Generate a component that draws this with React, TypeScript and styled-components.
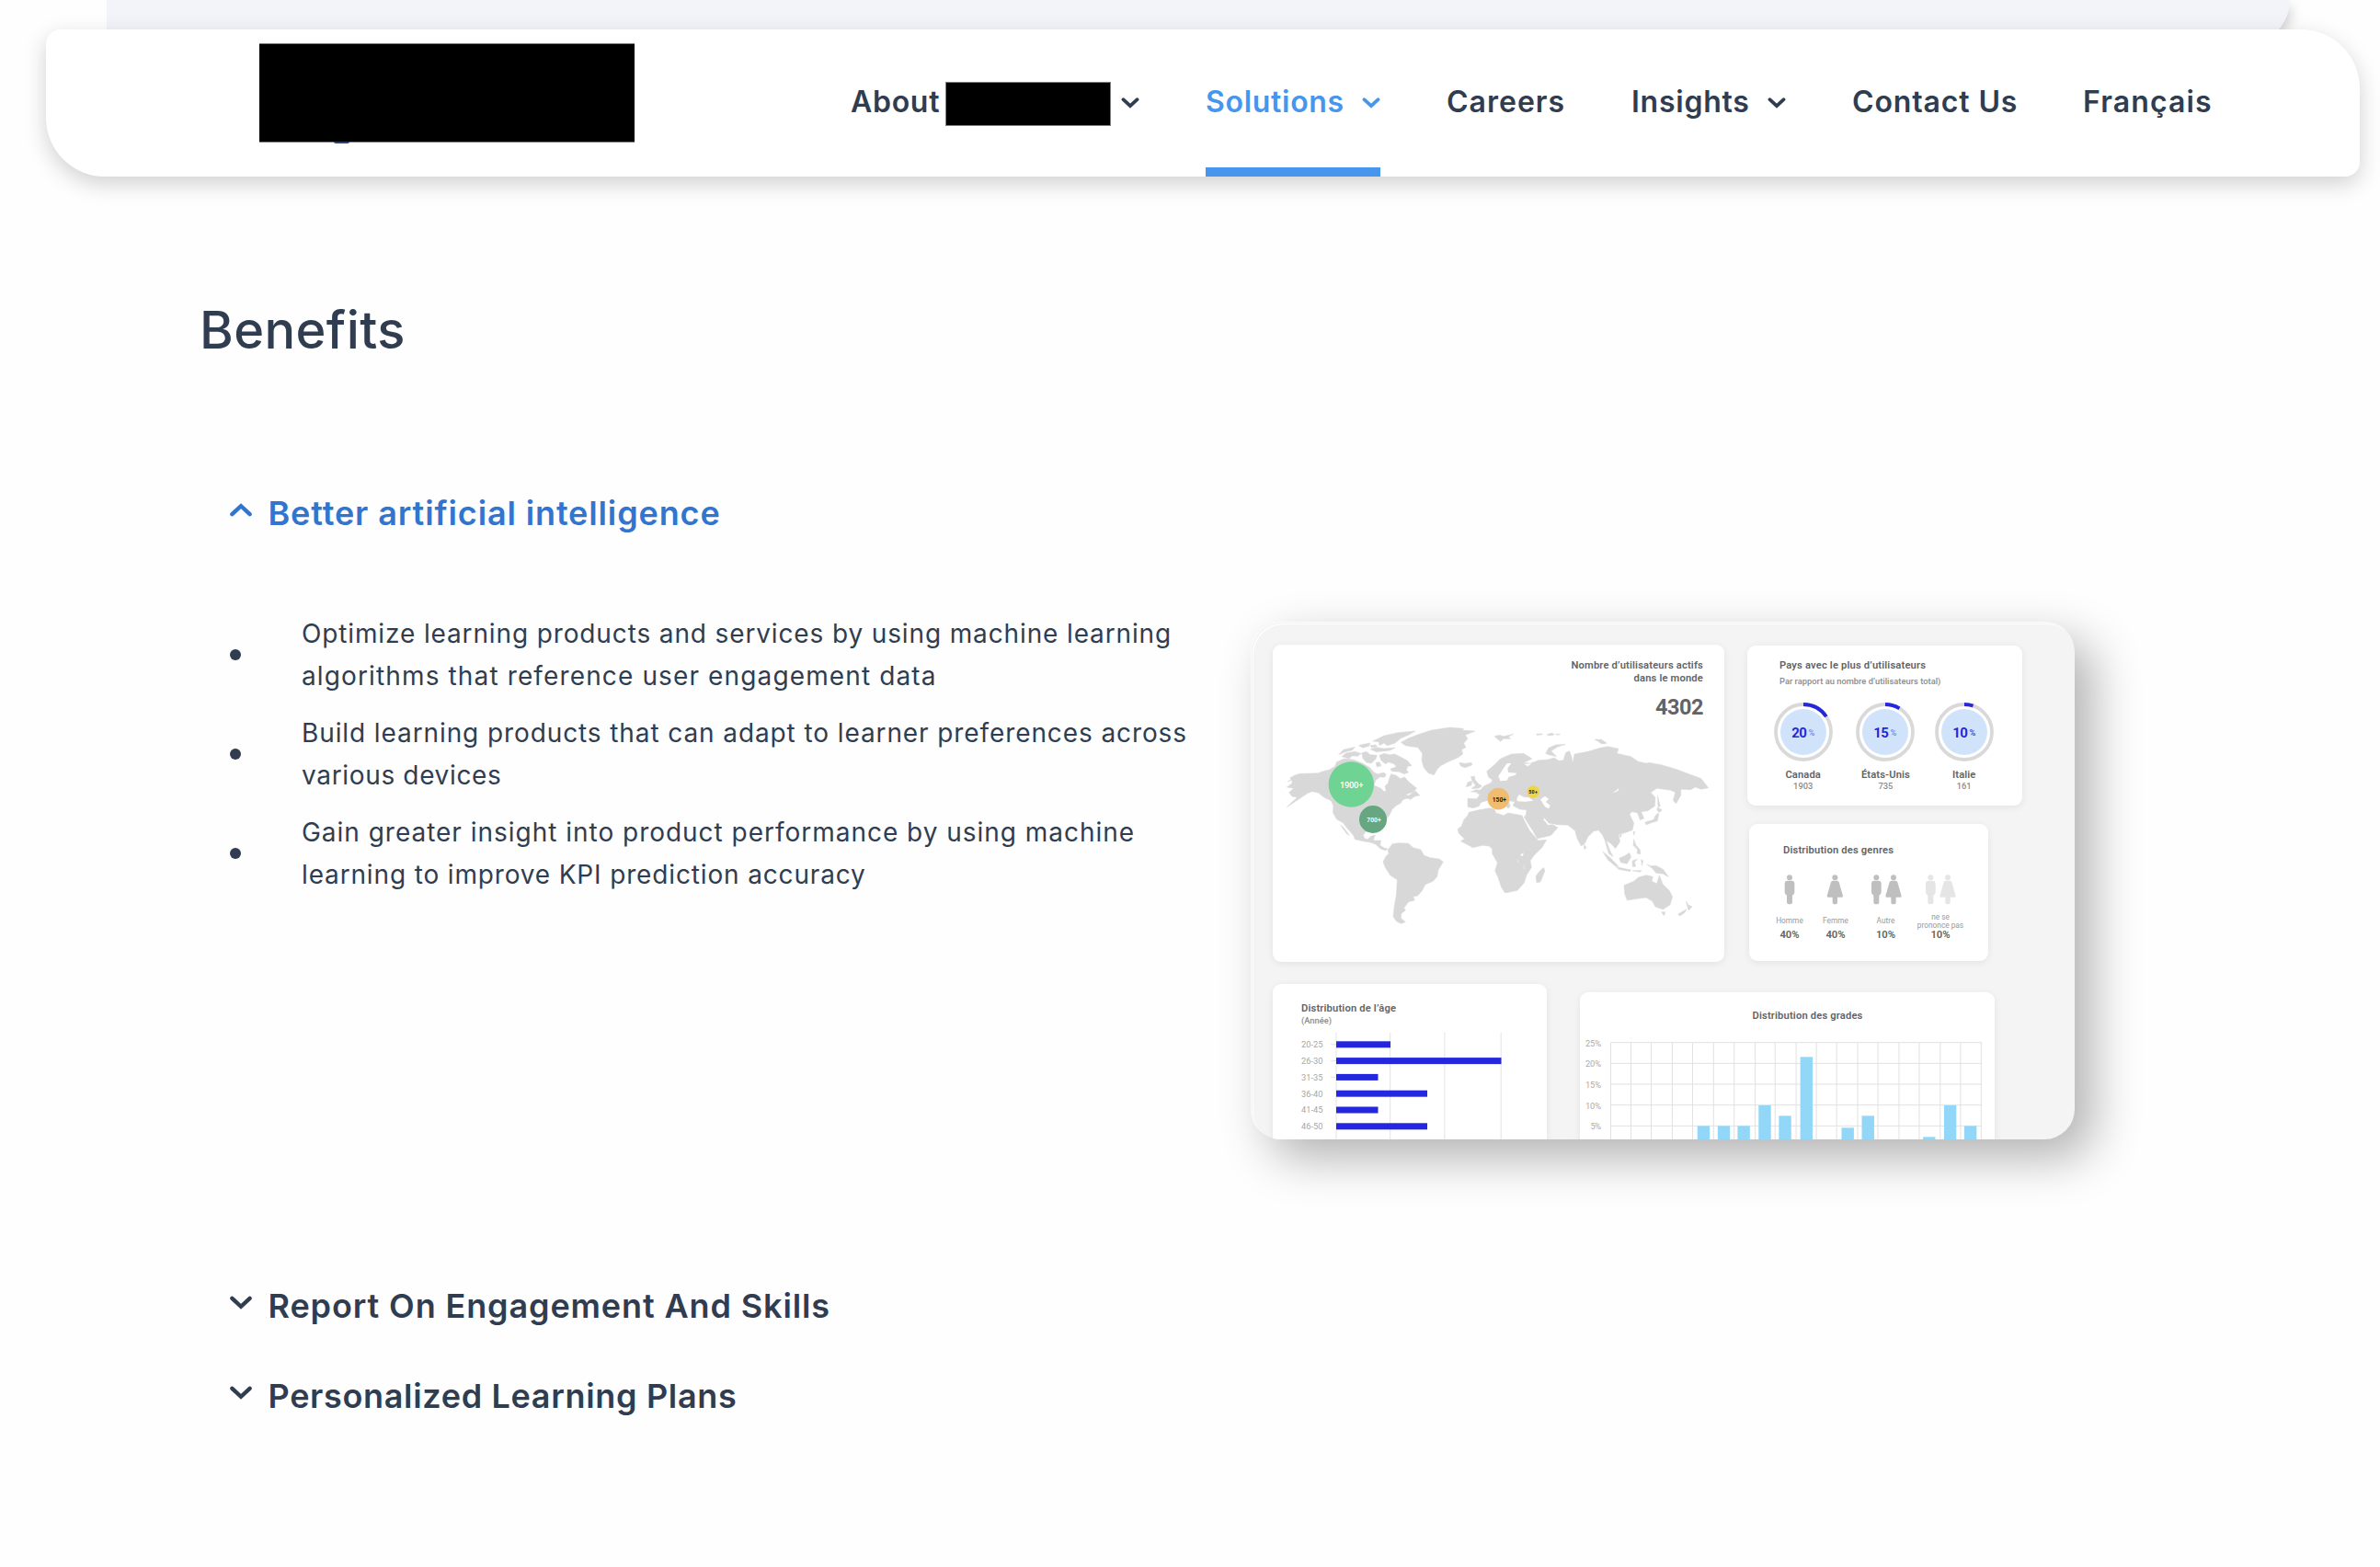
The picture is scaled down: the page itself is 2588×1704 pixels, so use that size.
import React from "react";
import styled, { createGlobalStyle } from "styled-components";

const ink = "#303d50";
const accent = "#4596ec";
const royal = "#2427de";

const GlobalStyle = createGlobalStyle`
  html, body { margin: 0; padding: 0; background: #fefefe; }
  body { font-family: Inter, "Open Sans", sans-serif; color: ${ink}; }
  * { box-sizing: border-box; }
  ul, h1, h2, p { margin: 0; padding: 0; }
`;

const Page = styled.div`
  width: 2588px;
  height: 1704px;
  overflow: hidden;
`;

const PreviousSection = styled.div`
  width: 2374px;
  height: 49px;
  margin-left: 116px;
  background: #f3f4f9;
  border-radius: 0 0 64px 0;
  box-shadow: 8px 2px 14px -6px rgba(0, 0, 0, 0.2);
`;

const Header = styled.header`
  position: relative;
  display: flex;
  align-items: flex-start;
  height: 160px;
  margin: -17px 22px 0 50px;
  padding: 0 161px 0 232px;
  background: #fff;
  border-radius: 16px 64px 16px 64px;
  box-shadow: 0 8px 24px rgba(0, 0, 0, 0.18);
`;

const Logo = styled.div`
  position: relative;
  width: 408px;
  height: 108px;
  margin-top: 15px;
  background: #000;
  border: solid #7d7d7d;
  border-width: 1px 0;
  &::after {
    content: "";
    position: absolute;
    left: 81px;
    top: 106px;
    width: 17px;
    height: 2px;
    border-radius: 0 0 8px 8px;
    background: #2c4470;
  }
`;

const Nav = styled.nav`
  display: flex;
  gap: 72px;
  margin-left: auto;
`;

const NavItem = styled.a<{ $w: number; $ls: number; $active?: boolean }>`
  display: flex;
  align-items: center;
  justify-content: space-between;
  width: ${(p) => p.$w}px;
  height: 160px;
  padding-bottom: ${(p) => (p.$active ? 0 : 2)}px;
  padding-top: ${(p) => (p.$active ? 8 : 0)}px;
  border-bottom: ${(p) => (p.$active ? `10px solid ${accent}` : "0")};
  color: ${(p) => (p.$active ? accent : ink)};
  font-size: 32px;
  font-weight: 600;
  line-height: 40px;
  letter-spacing: ${(p) => p.$ls}px;
  white-space: nowrap;
  svg { margin-top: 2px; }
`;

const Redacted = styled.span`
  flex: none;
  width: 180px;
  height: 48px;
  margin: 4px auto 0 6px;
  background: #000;
  border: 1px solid #7d7d7d;
`;

const Title = styled.h1`
  margin: 135px 0 0 217px;
  font-size: 56px;
  font-weight: 500;
  line-height: 64px;
  letter-spacing: 0.4px;
`;

const Accordion = styled.section`
  margin: 143px 0 0 250px;
`;

const AccordionHead = styled.h2<{ $open?: boolean; $ls: number }>`
  display: flex;
  gap: 17.5px;
  height: 48px;
  font-size: 36px;
  font-weight: 600;
  line-height: 48px;
  letter-spacing: ${(p) => p.$ls}px;
  color: ${(p) => (p.$open ? "#3275cf" : ink)};
  white-space: nowrap;
  & + & { margin-top: 50px; }
  svg { margin-top: 13px; }
`;

const Panel = styled.div`
  display: flex;
  height: 730px;
  margin-top: 84px;
`;

const Benefits = styled.ul`
  display: flex;
  flex-direction: column;
  gap: 16px;
  width: 1110px;
  list-style: none;
`;

const Benefit = styled.li`
  display: flex;
  align-items: center;
  gap: 66px;
  &::before {
    content: "";
    width: 12px;
    height: 12px;
    border-radius: 50%;
    background: ${ink};
  }
`;

const Line = styled.span<{ $ls: number }>`
  display: block;
  font-size: 28px;
  line-height: 46px;
  letter-spacing: ${(p) => p.$ls}px;
  white-space: nowrap;
`;

const Preview = styled.div`
  width: 896px;
  height: 563px;
  margin-top: 10px;
  padding: 25px 0 0 24px;
  overflow: hidden;
  border-radius: 33px;
  background: #f4f4f4;
  font-family: Roboto, sans-serif;
  color: #636363;
  box-shadow: inset 1px 1px 0 #fbfbfb, inset 2px 2px 0 #f2f2f2, inset 3px 3px 0 #fff,
    20px 20px 52px rgba(0, 0, 0, 0.3);
`;

const TopRow = styled.div`
  display: flex;
  gap: 25px;
`;

const BottomRow = styled.div`
  display: flex;
  gap: 36px;
  margin-top: 24px;
`;

const SideColumn = styled.div`
  display: flex;
  flex-direction: column;
  padding-top: 1px;
`;

const Card = styled.div`
  background: #fff;
  border-radius: 9px;
  box-shadow: 0 2px 9px rgba(0, 0, 0, 0.07);
  white-space: nowrap;
`;

const MapCard = styled(Card)`
  width: 491px;
  height: 345px;
  padding: 16px 23px 0 6px;
  text-align: right;
`;

const CountryCard = styled(Card)`
  width: 299px;
  height: 174px;
  padding: 15px 0 0 35px;
`;

const GenderCard = styled(Card)`
  width: 260px;
  height: 149px;
  margin: 20px 0 0 2px;
  padding: 22px 0 0 37px;
`;

const AgeCard = styled(Card)`
  width: 298px;
  height: 200px;
  padding: 20px 0 0 31px;
`;

const GradeCard = styled(Card)`
  width: 451px;
  height: 200px;
  margin-top: 9px;
  padding-top: 19px;
`;

const CardTitle = styled.p<{ $center?: boolean }>`
  font-size: 11.2px;
  font-weight: 600;
  line-height: 14px;
  letter-spacing: 0.16px;
  ${(p) => p.$center && "padding-left: 44px; text-align: center;"}
`;

const CardNote = styled.p`
  font-size: 9.3px;
  font-weight: 500;
  line-height: 12px;
  color: #8b8b8b;
  ${CardTitle} + & { letter-spacing: 0.03px; }
`;

const Total = styled.p`
  margin: 14px 0 1px;
  font-size: 23.5px;
  font-weight: 700;
  line-height: 20px;
  letter-spacing: -0.5px;
`;

const Countries = styled.div`
  display: grid;
  grid-template-columns: 95.4px 84px 86.6px;
  justify-items: center;
  margin: 17px 0 0 -22px;
`;

const CountryHeading = styled.div`
  display: flex;
  flex-direction: column;
  gap: 3.5px;
`;

const Country = styled.div`
  display: flex;
  flex-direction: column;
  align-items: center;
  svg { margin-bottom: 9px; }
`;

const CountryName = styled.span`
  font-size: 11.2px;
  font-weight: 600;
  line-height: 12px;
  letter-spacing: 0.1px;
`;

const Genders = styled.div`
  display: grid;
  grid-template-columns: 50px 50px 59px 60px;
  margin: 19px 0 0 -18px;
`;

const Gender = styled.div`
  display: flex;
  flex-direction: column;
  align-items: center;
`;

const GenderLabel = styled.span`
  display: flex;
  align-items: center;
  height: 20px;
  margin-top: 8px;
  font-size: 8.3px;
  line-height: 9.2px;
  text-align: center;
  white-space: pre;
  color: #999;
`;

const GenderShare = styled.span`
  margin-top: -1px;
  font-size: 11.3px;
  font-weight: 600;
  line-height: 12px;
`;

const Chart = styled.svg`
  display: block;
  font-family: Roboto, sans-serif;
`;

const NavChevron = () => (
  <svg width="20" height="12" viewBox="0 0 20 12">
    <path d="M2.4 2.2 10 9.2 17.6 2.2" fill="none" stroke="currentColor" strokeWidth="3.7" strokeLinecap="round" />
  </svg>
);

const HeadChevron = ({ up }: { up?: boolean }) => (
  <svg width="24" height="15" viewBox="0 0 24 15">
    <path
      d={up ? "M2.4 12.2 12 3.2 21.6 12.2" : "M2.4 2.8 12 11.8 21.6 2.8"}
      fill="none"
      stroke="currentColor"
      strokeWidth="4.4"
      strokeLinecap="round"
    />
  </svg>
);

const west = [
  "M45 205 30 210 42 203 38 198 52 190 70 184 105 183 130 182 150 175 165 172 185 160 190 146 215 135 245 138 275 150 300 165 312 180 325 185 345 180 352 188 330 196 318 205 312 222 335 232 345 242 352 240 348 225 358 215 362 200 368 185 385 190 398 200 412 195 425 210 440 222 452 232 440 244 415 252 425 256 447 240 462 255 445 258 432 268 420 264 405 270 400 280 385 288 372 300 362 320 350 335 330 350 318 362 322 378 312 372 300 370 285 373 277 385 282 396 292 398 302 388 316 384 310 402 335 402 332 418 345 426 358 430 350 434 335 430 318 415 300 408 280 405 250 398 245 385 225 362 212 345 190 332 178 310 180 290 172 272 150 262 130 246 110 242 95 248 75 262 28 293 45 276 62 262 45 258 35 245 50 232 28 228 45 215Z",
  "M203 350 215 362 232 385 225 382 210 362Z",
  "M400 82 425 68 460 55 500 42 560 33 605 37 600 42 642 45 610 58 618 70 605 85 612 98 598 105 602 120 585 132 555 145 530 158 518 170 508 188 490 182 475 165 468 140 470 118 455 98 430 95 415 92Z",
  "M308 78 345 60 390 50 447 45 425 58 400 68 380 85 355 92 345 84 330 92 328 80Z",
  "M330 124 345 118 362 122 380 120 400 130 422 142 435 158 422 160 418 172 425 180 410 185 395 178 370 176 366 168 385 162 378 152 360 146 350 152 335 140Z",
  "M300 104 320 98 345 102 382 99 365 108 320 113Z",
  "M197 122 212 106 250 97 242 107 222 112Z",
  "M207 128 222 116 250 112 270 118 260 127 240 126 232 135Z",
  "M272 116 288 112 300 122 322 124 318 136 304 150 288 148 276 134Z",
  "M262 92 278 88 300 84 296 94 276 100Z",
  "M300 92 318 90 322 96 304 98Z",
  "M318 148 330 146 336 158 322 162Z",
  "M332 188 345 186 350 194 338 196Z",
  "M358 432 372 413 392 410 425 412 440 425 465 432 475 450 495 458 525 462 538 472 522 498 518 520 505 535 480 545 470 565 455 582 440 585 445 597 425 602 410 622 415 630 402 640 400 655 415 668 400 673 385 665 375 650 378 620 385 580 388 530 365 515 348 488 342 472 350 455 360 445Z",
  "M590 148 610 151 630 148 632 156 610 164 596 160Z",
  "M628 194 640 192 642 204 652 216 664 224 655 231 630 233 644 222 634 210Z",
  "M618 212 632 208 630 222 613 227Z",
];

const east = [
  "M112 310 140 303 180 296 195 300 200 312 225 320 240 312 285 320 292 335 310 370 332 395 338 402 365 400 350 425 325 450 312 468 316 490 300 515 292 540 270 565 230 573 218 555 208 525 197 500 205 475 188 445 188 430 178 420 155 418 125 425 100 412 85 404 98 397 80 380 75 365 88 355 95 335 108 320Z",
  "M355 490 360 500 345 537 333 540 330 520 340 505Z",
  "M108 265 138 266 147 252 133 244 118 243 135 236 148 238 160 225 185 213 188 203 176 196 170 176 195 155 215 135 250 120 290 118 318 135 305 142 290 148 312 150 340 140 370 138 390 132 405 142 420 140 428 115 440 110 447 130 450 150 456 120 500 112 540 100 565 95 600 103 595 118 640 128 665 145 690 150 700 148 740 155 790 170 830 185 870 200 893 230 870 235 850 228 835 236 803 235 803 255 788 281 778 272 785 245 770 238 725 232 705 245 720 262 718 290 695 305 674 308 683 330 670 335 662 312 645 308 636 316 650 345 645 368 618 378 600 382 605 405 590 428 575 412 560 402 570 430 582 455 568 445 555 400 548 385 535 368 518 372 500 390 490 412 478 420 465 395 458 370 435 352 400 350 372 345 358 328 354 334 370 352 385 350 402 360 380 385 335 396 320 370 302 342 292 325 298 318 300 302 278 300 255 288 262 275 240 272 247 290 240 298 225 280 205 262 200 268 222 290 214 295 190 270 170 272 150 278 145 290 125 296 108 292Z",
  "M362 118 372 100 395 90 427 88 400 97 380 110 398 128 372 122Z",
  "M195 62 212 58 225 62 257 55 240 64 248 70 225 70 215 79Z",
  "M332 54 352 54 350 57 334 58Z M366 56 384 51 390 57 374 60Z M394 55 410 55 402 58Z",
  "M522 72 545 73 562 85 545 87 532 78Z",
  "M727 293 742 303 734 310 726 304Z M732 312 727 338 707 344 690 351 686 343 714 334 722 318Z M727 255 736 290 729 292Z",
  "M486 415 495 424 489 431Z",
  "M548 438 575 460 600 487 590 486 566 466Z",
  "M592 488 640 498 638 503 600 496Z M645 500 675 500 670 505Z",
  "M602 460 620 452 635 442 641 455 628 478 608 474Z",
  "M645 468 662 463 652 472 656 486 646 488Z M674 464 680 468 676 484Z",
  "M692 480 705 485 722 484 745 496 764 521 745 511 722 508 712 494Z",
  "M650 398 656 416 670 432 672 446 660 444 662 432 648 418Z M648 374 654 372 650 384Z M603 384 610 382 607 392Z",
  "M618 548 650 535 665 522 690 515 712 520 708 535 725 542 733 515 745 545 765 565 776 585 768 612 745 627 720 618 710 600 690 588 660 592 628 597 620 575Z",
  "M740 635 753 635 748 647Z",
  "M820 600 828 612 840 618 828 630 824 614Z M822 626 815 638 800 648 794 642Z",
];

const seas = [
  "M208 192 220 174 236 150 250 150 238 166 240 180 268 182 262 189 242 194 236 206 214 208Z",
  "M268 266 276 252 290 260 308 262 322 272 296 275 270 274Z",
  "M345 268 360 257 372 266 363 276 377 288 372 298 360 292Z",
  "M282 446 290 442 288 452 281 452Z",
  "M292 152 316 151 304 160Z",
  "M580 248 602 230 598 240Z",
  "M270 460 274 474 272 474Z M290 476 294 500 291 492Z",
];

const WorldMap = () => (
  <Chart width="470" height="240" viewBox="0 0 1410 720">
    <g fill="#d8d8d8" stroke="#d8d8d8" strokeWidth="1.5" strokeLinejoin="round">
      {west.map((d) => <path key={d} d={d} />)}
    </g>
    <g transform="translate(510 0)">
      <g fill="#d8d8d8" stroke="#d8d8d8" strokeWidth="1.5" strokeLinejoin="round">
        {east.map((d) => <path key={d} d={d} />)}
      </g>
      {seas.map((d) => <path key={d} d={d} fill="#fff" />)}
    </g>
    <circle cx="238" cy="219" r="74" fill="#6fd393" />
    <circle cx="309" cy="333" r="45" fill="#66a681" />
    <circle cx="718" cy="266" r="35.5" fill="#efbc70" />
    <circle cx="832" cy="243" r="20.5" fill="#efd545" />
    <g fontWeight="600" textAnchor="middle">
      <text x="239" y="230" fontSize="28" fill="#fff" fontWeight="500" textLength="76">1900+</text>
      <text x="312" y="343" fontSize="20" fill="#fff" textLength="46">700+</text>
      <text x="721" y="276" fontSize="20" fill="#222" fontWeight="700" textLength="46">150+</text>
      <text x="831" y="249" fontSize="16" fill="#222" fontWeight="700" textLength="29">50+</text>
    </g>
  </Chart>
);

const countries = [
  { name: "Canada", count: "1903", share: "20", angle: 56, sign: "#6d8cf0" },
  { name: "États-Unis", count: "735", share: "15", angle: 31, sign: "#6d8cf0" },
  { name: "Italie", count: "161", share: "10", angle: 18.5, sign: "#3b45e0" },
];

const Ring = ({ share, angle, sign }: { share: string; angle: number; sign: string }) => {
  const a = (angle * Math.PI) / 180;
  return (
    <Chart width="64" height="64" viewBox="0 0 64 64">
      <circle cx="32" cy="32" r="30" fill="none" stroke="#d9d9d9" strokeWidth="3.8" />
      <circle cx="32" cy="32" r="25" fill="#d0e3fa" />
      <path
        d={`M32 2A30 30 0 0 1 ${32 + 30 * Math.sin(a)} ${32 - 30 * Math.cos(a)}`}
        fill="none"
        stroke={royal}
        strokeWidth="3.8"
      />
      <text x="19.2" y="38" fontSize="15" fontWeight="700" fill={royal} textLength="16.6">{share}</text>
      <text x="37.6" y="35.9" fontSize="8.6" fontWeight="600" fill={sign} textLength="6.8" lengthAdjust="spacingAndGlyphs">%</text>
    </Chart>
  );
};

const Man = ({ x }: { x: number }) => (
  <g transform={`translate(${x} 0)`}>
    <circle cx="0" cy="9.5" r="9" />
    <path d="M-7 20H7Q16 20 16 30V58Q16 66 9 68V91Q9 97 3 97H-3Q-9 97-9 91V68Q-16 66-16 58V30Q-16 20-7 20Z" />
  </g>
);

const Woman = ({ x }: { x: number }) => (
  <g transform={`translate(${x} 0)`}>
    <circle cx="0" cy="9.5" r="9" />
    <path d="M-7 20H7Q11 20 13 25L26 70Q27 74 22 74H8V91Q8 97 3 97H-3Q-8 97-8 91V74H-22Q-27 74-26 70L-13 25Q-11 20-7 20Z" />
  </g>
);

const genders = [
  { label: "Homme", share: "40%", fill: "#bfbfbf", kind: "man" },
  { label: "Femme", share: "40%", fill: "#bfbfbf", kind: "woman" },
  { label: "Autre", share: "10%", fill: "#bfbfbf", kind: "pair" },
  { label: "ne se\nprononce pas", share: "10%", fill: "#e5e5e5", kind: "pair" },
];

const People = ({ kind, fill }: { kind: string; fill: string }) => (
  <Chart width="34" height="33" viewBox="-51 0 102 99" fill={fill}>
    {kind === "man" && <Man x={0} />}
    {kind === "woman" && <Woman x={-2} />}
    {kind === "pair" && (
      <>
        <Man x={-32} />
        <Woman x={24} />
      </>
    )}
  </Chart>
);

const ages: [string, number][] = [
  ["20-25", 59], ["26-30", 179.5], ["31-35", 45.5], ["36-40", 99], ["41-45", 45.5], ["46-50", 99],
];

const AgeChart = () => (
  <Chart width="266" height="130" viewBox="0 0 266 130">
    {[38, 96.7, 155.9, 217.2].map((x) => (
      <path key={x} d={`M${x} 7V130`} stroke="#e3e3e3" />
    ))}
    {ages.map(([label, w], i) => {
      const y = 19.8 + i * 17.8;
      return (
        <g key={label}>
          {i < 3 && <path d={`M32 ${y}H38`} stroke="#e3e3e3" />}
          <text x="0" y={y + 3.3} fontSize="9.3" fill="#a6a6a6" textLength="23.4">{label}</text>
          <rect x="38" y={y - 3.5} width={w} height="7" fill={royal} />
        </g>
      );
    })}
  </Chart>
);

const columns = [126, 180, 234, 290, 344, 400, 455, 511, 564, 620, 674, 728, 784, 838, 894, 948, 1004, 1058, 1113];
const bars: [number, number][] = [
  [357, 493], [411, 493], [464, 493], [520, 426], [574, 460], [631, 268], [741, 499],
  [795, 460], [958, 529], [1014, 426], [1068, 493],
];
const gx = (v: number) => (v - 44) / 2.45;
const gy = (v: number) => v / 3 - 52;

const GradeChart = () => (
  <Chart width="451" height="140" viewBox="0 0 451 140">
    {columns.map((c) => (
      <path key={c} d={`M${gx(c)} ${gy(221)}V140`} stroke="#e1e1e1" />
    ))}
    {["25%", "20%", "15%", "10%", "5%"].map((label, i) => (
      <g key={label}>
        <path d={`M${gx(126)} ${gy(221 + i * 68)}H${gx(1114)}`} stroke="#e1e1e1" />
        <text x="23" y={gy(233 + i * 68)} fontSize="9.3" fill="#ababab" textAnchor="end" textLength={label.length === 3 ? 17 : 11.5}>
          {label}
        </text>
      </g>
    ))}
    {bars.map(([x, y]) => (
      <rect key={x} x={gx(x)} y={gy(y)} width="13.4" height={140 - gy(y)} fill="#92d7f7" />
    ))}
  </Chart>
);

const benefits: [string, number][][] = [
  [
    ["Optimize learning products and services by using machine learning", 0.87],
    ["algorithms that reference user engagement data", 1.13],
  ],
  [
    ["Build learning products that can adapt to learner preferences across", 0.9],
    ["various devices", 0.66],
  ],
  [
    ["Gain greater insight into product performance by using machine", 0.98],
    ["learning to improve KPI prediction accuracy", 0.85],
  ],
];

export default function App() {
  return (
    <Page>
      <GlobalStyle />
      <PreviousSection />
      <Header>
        <Logo />
        <Nav>
          <NavItem $w={314} $ls={0.7}>About<Redacted /><NavChevron /></NavItem>
          <NavItem $w={190} $ls={0.7} $active>Solutions<NavChevron /></NavItem>
          <NavItem $w={129} $ls={1}>Careers</NavItem>
          <NavItem $w={168} $ls={0.76}>Insights<NavChevron /></NavItem>
          <NavItem $w={179} $ls={0.87}>Contact Us</NavItem>
          <NavItem $w={140} $ls={1.13}>Français</NavItem>
        </Nav>
      </Header>
      <Title>Benefits</Title>
      <Accordion>
        <AccordionHead $open $ls={0.87}><HeadChevron up />Better artificial intelligence</AccordionHead>
        <Panel>
          <Benefits>
            {benefits.map((lines) => (
              <Benefit key={lines[0][0]}>
                <div>
                  {lines.map(([text, ls]) => <Line key={text} $ls={ls}>{text}</Line>)}
                </div>
              </Benefit>
            ))}
          </Benefits>
          <Preview>
            <TopRow>
              <MapCard>
                <CardTitle>Nombre d’utilisateurs actifs</CardTitle>
                <CardTitle>dans le monde</CardTitle>
                <Total>4302</Total>
                <WorldMap />
              </MapCard>
              <SideColumn>
                <CountryCard>
                  <CountryHeading>
                    <CardTitle>Pays avec le plus d’utilisateurs</CardTitle>
                    <CardNote>Par rapport au nombre d’utilisateurs total)</CardNote>
                  </CountryHeading>
                  <Countries>
                    {countries.map((c) => (
                      <Country key={c.name}>
                        <Ring share={c.share} angle={c.angle} sign={c.sign} />
                        <CountryName>{c.name}</CountryName>
                        <CardNote>{c.count}</CardNote>
                      </Country>
                    ))}
                  </Countries>
                </CountryCard>
                <GenderCard>
                  <CardTitle>Distribution des genres</CardTitle>
                  <Genders>
                    {genders.map((g) => (
                      <Gender key={g.label}>
                        <People kind={g.kind} fill={g.fill} />
                        <GenderLabel>{g.label}</GenderLabel>
                        <GenderShare>{g.share}</GenderShare>
                      </Gender>
                    ))}
                  </Genders>
                </GenderCard>
              </SideColumn>
            </TopRow>
            <BottomRow>
              <AgeCard>
                <CardTitle>Distribution de l’âge</CardTitle>
                <CardNote>(Année)</CardNote>
                <AgeChart />
              </AgeCard>
              <GradeCard>
                <CardTitle $center>Distribution des grades</CardTitle>
                <GradeChart />
              </GradeCard>
            </BottomRow>
          </Preview>
        </Panel>
        <AccordionHead $ls={0.88}><HeadChevron />Report On Engagement And Skills</AccordionHead>
        <AccordionHead $ls={0.67}><HeadChevron />Personalized Learning Plans</AccordionHead>
      </Accordion>
    </Page>
  );
}
